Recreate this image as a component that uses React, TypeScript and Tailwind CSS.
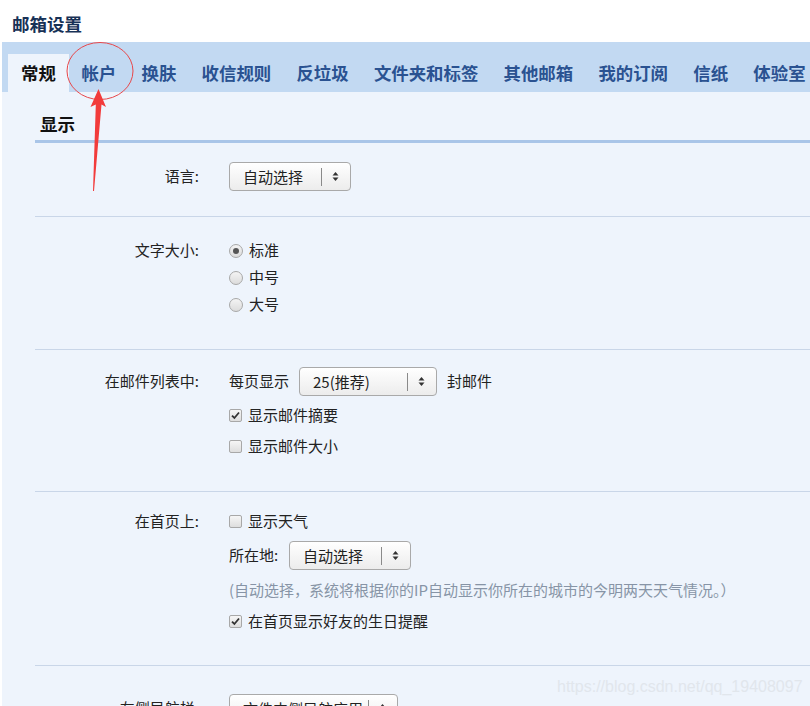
import React from "react";

const Arrows = () => (
  <svg width="7" height="11" viewBox="0 0 7 11">
    <polygon points="0.5,4.5 3.5,1 6.5,4.5" fill="#333" />
    <polygon points="0.5,6.5 3.5,10 6.5,6.5" fill="#333" />
  </svg>
);

function Select({ text, className }: { text: string; className: string }) {
  return (
    <div
      className={
        "flex items-center h-[29px] border border-[#a9a9a9] rounded-[4px] bg-gradient-to-b from-white to-[#ececec] shrink-0 " +
        className
      }
    >
      <div className="flex-1 pl-[13px] text-[15px] text-[#222] leading-[20px] whitespace-nowrap overflow-hidden">{text}</div>
      <div className="w-px h-[18px] bg-[#8a8a8a]" />
      <div className="w-[28px] pr-[2px] flex justify-center items-center">
        <Arrows />
      </div>
    </div>
  );
}

function Radio({ checked, label }: { checked?: boolean; label: string }) {
  return (
    <div className="h-[27px] flex items-center gap-[6px]">
      <div className="w-[14px] h-[14px] rounded-full border border-[#a8a8a8] bg-gradient-to-b from-[#f4f4f4] to-[#dcdcdc] flex items-center justify-center">
        {checked && <div className="w-[6px] h-[6px] rounded-full bg-[#555]" />}
      </div>
      <span className="text-[15px] text-[#222]">{label}</span>
    </div>
  );
}

function Check({ checked, label, className }: { checked?: boolean; label: string; className: string }) {
  return (
    <div className={"flex items-center gap-[6px] " + className}>
      <div className="w-[13px] h-[13px] rounded-[2px] border border-[#a8a8a8] bg-gradient-to-b from-[#f6f6f6] to-[#dedede] flex items-center justify-center">
        {checked && (
          <svg width="9" height="9" viewBox="0 0 9 9">
            <path d="M1 4.6 L3.4 7 L8 1.5" stroke="#333" strokeWidth="1.8" fill="none" />
          </svg>
        )}
      </div>
      <span className="text-[15px] text-[#222]">{label}</span>
    </div>
  );
}

function Label({ text, h }: { text: string; h: string }) {
  return (
    <div className={"w-[164px] shrink-0 flex items-center justify-end text-[15px] text-[#222] whitespace-nowrap " + h}>{text}</div>
  );
}

const tabs = ["帐户", "换肤", "收信规则", "反垃圾", "文件夹和标签", "其他邮箱", "我的订阅", "信纸", "体验室"];

export default function App() {
  return (
    <div className="relative w-[810px] h-[706px] overflow-hidden bg-white font-['Noto_Sans_CJK_SC','Noto_Sans',sans-serif]">
      <div className="h-[42px] pl-[12px] pt-[11px] text-[17.5px] leading-[26px] font-bold text-[#173156]">邮箱设置</div>
      <div className="ml-[2px] bg-[#eef4fc] h-[664px]">
        <div className="h-[50px] bg-[#c2d9f2] flex items-end pl-[6px] whitespace-nowrap">
          <div className="h-[38px] flex items-center px-[13px] bg-[#eef4fc] text-[17.4px] font-bold text-[#111]">常规</div>
          {tabs.map((t) => (
            <div key={t} className="h-[38px] flex items-center px-[12.65px] text-[17.4px] font-bold text-[#2a5291]">
              {t}
            </div>
          ))}
        </div>
        <div className="pl-[33px]">
          <div className="h-[51px] border-b-[3px] border-[#a9c5e8] pl-[5px] pt-[20px] text-[17.5px] leading-[24px] font-bold text-[#111]">
            显示
          </div>

          <div className="flex gap-[30px] pt-[19px] pb-[25px] border-b border-[#c9d6e8]">
            <Label text="语言:" h="h-[29px]" />
            <Select text="自动选择" className="w-[122px]" />
          </div>

          <div className="flex gap-[30px] pt-[20px] pb-[31px] border-b border-[#c9d6e8]">
            <Label text="文字大小:" h="h-[27px]" />
            <div className="flex flex-col">
              <Radio checked label="标准" />
              <Radio label="中号" />
              <Radio label="大号" />
            </div>
          </div>

          <div className="flex gap-[30px] pt-[17px] pb-[29px] border-b border-[#c9d6e8]">
            <Label text="在邮件列表中:" h="h-[29px]" />
            <div className="flex flex-col">
              <div className="flex items-center h-[29px] text-[15px] text-[#222] whitespace-nowrap">
                <span className="w-[70px]">每页显示</span>
                <Select text="25(推荐)" className="w-[138px]" />
                <span className="ml-[10px]">封邮件</span>
              </div>
              <Check checked label="显示邮件摘要" className="h-[31px] mt-[4px]" />
              <Check label="显示邮件大小" className="h-[31px]" />
            </div>
          </div>

          <div className="flex gap-[30px] pt-[16px] pb-[29px] border-b border-[#c9d6e8]">
            <Label text="在首页上:" h="h-[27px]" />
            <div className="flex flex-col">
              <Check label="显示天气" className="h-[27px]" />
              <div className="flex items-center h-[29px] mt-[6px] text-[15px] text-[#222] whitespace-nowrap">
                <span className="w-[60px]">所在地:</span>
                <Select text="自动选择" className="w-[122px]" />
              </div>
              <div className="h-[26px] mt-[7px] flex items-center text-[15px] text-[#8794a6] whitespace-nowrap">
                (自动选择，系统将根据你的IP自动显示你所在的城市的今明两天天气情况。）
              </div>
              <Check checked label="在首页显示好友的生日提醒" className="h-[30px] mt-[3px]" />
            </div>
          </div>

          <div className="flex gap-[30px] pt-[28px]">
            <Label text="左侧导航栏:" h="h-[29px]" />
            <Select text="文件夹侧导航应用" className="w-[169px]" />
          </div>
        </div>
      </div>

      <div className="absolute left-[557px] top-[677px] text-[16px] leading-[20px] text-[#e1e6ec] font-['Liberation_Sans',Arial,sans-serif] whitespace-nowrap">
        https://blog.csdn.net/qq_19408097
      </div>

      <svg className="absolute left-0 top-0 pointer-events-none" width="810" height="706">
        <ellipse cx="100" cy="71" rx="33" ry="28.5" fill="none" stroke="#e8474a" strokeWidth="1" />
        <polygon points="98.5,89 106,107 101.5,104.5 94,191 93,191 95.8,104.5 90.5,107" fill="#f23b3b" />
      </svg>
    </div>
  );
}
